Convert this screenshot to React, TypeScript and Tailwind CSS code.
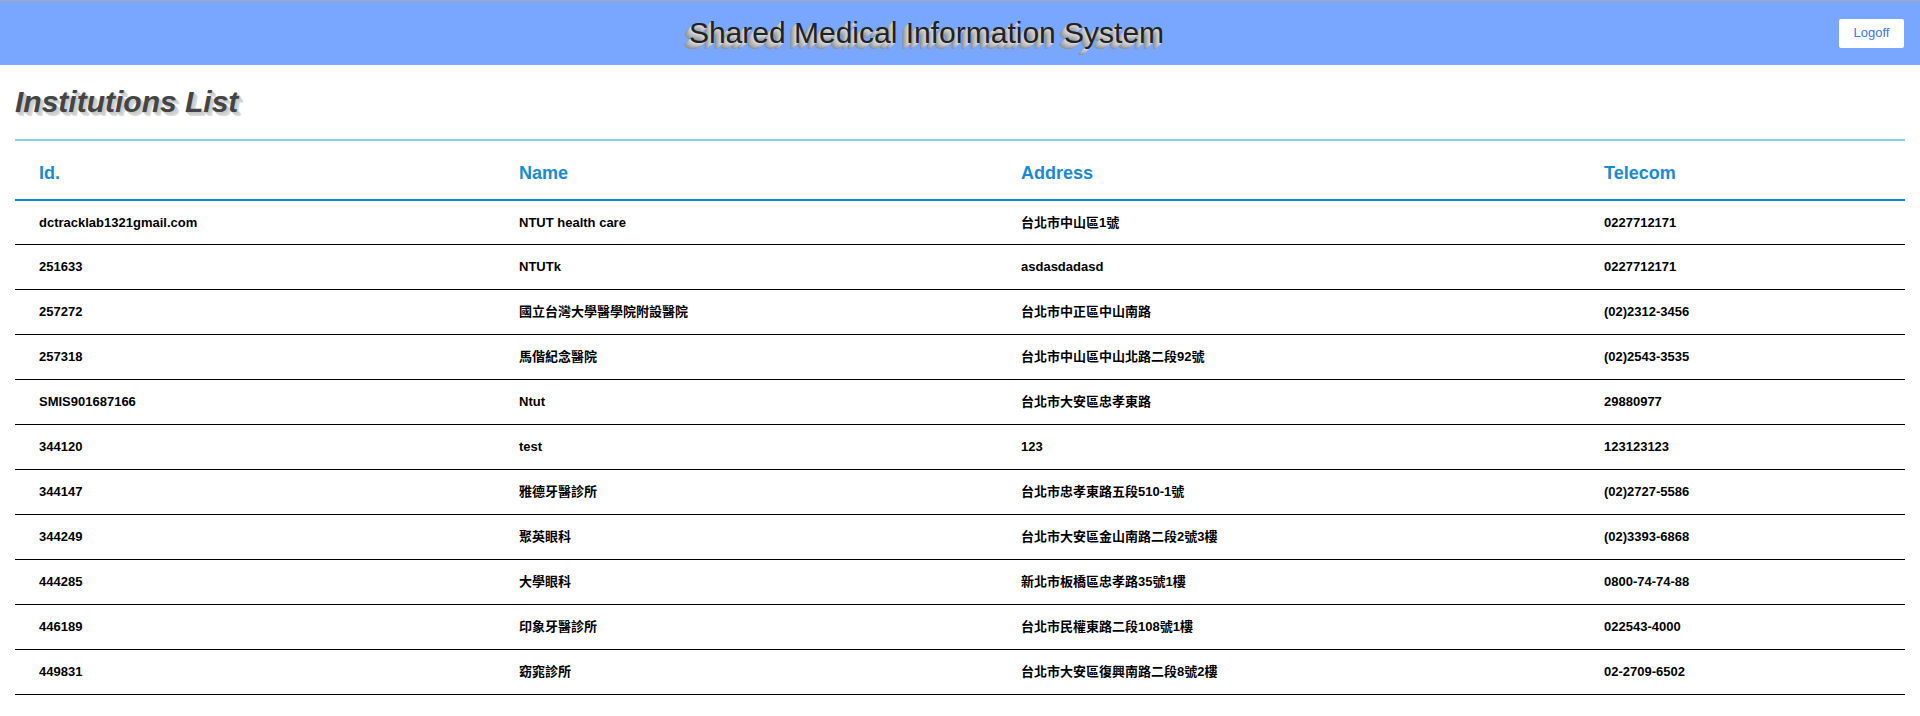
import React from 'react';

interface Institution {
  id: string;
  name: string;
  address: string;
  telecom: string;
}

const institutions: Institution[] = [
  { id: 'dctracklab1321gmail.com', name: 'NTUT health care', address: '台北市中山區1號', telecom: '0227712171' },
  { id: '251633', name: 'NTUTk', address: 'asdasdadasd', telecom: '0227712171' },
  { id: '257272', name: '國立台灣大學醫學院附設醫院', address: '台北市中正區中山南路', telecom: '(02)2312-3456' },
  { id: '257318', name: '馬偕紀念醫院', address: '台北市中山區中山北路二段92號', telecom: '(02)2543-3535' },
  { id: 'SMIS901687166', name: 'Ntut', address: '台北市大安區忠孝東路', telecom: '29880977' },
  { id: '344120', name: 'test', address: '123', telecom: '123123123' },
  { id: '344147', name: '雅德牙醫診所', address: '台北市忠孝東路五段510-1號', telecom: '(02)2727-5586' },
  { id: '344249', name: '聚英眼科', address: '台北市大安區金山南路二段2號3樓', telecom: '(02)3393-6868' },
  { id: '444285', name: '大學眼科', address: '新北市板橋區忠孝路35號1樓', telecom: '0800-74-74-88' },
  { id: '446189', name: '印象牙醫診所', address: '台北市民權東路二段108號1樓', telecom: '022543-4000' },
  { id: '449831', name: '窈窕診所', address: '台北市大安區復興南路二段8號2樓', telecom: '02-2709-6502' },
];

const cols = 'grid grid-cols-[480px_502px_583px_1fr]';

/**
 * Institutions list page of the shared medical information system
 */
export default function App() {
  return (
    <div className="min-h-[716px] bg-white font-['Liberation_Sans','Noto_Sans_CJK_TC',Arial,sans-serif]">
      <header className="flex h-[65px] items-center border-t border-[#a9a9a9] bg-[#79a7ff]">
        <div className="flex-1 pl-[14px] text-center">
          <span className="text-[30px] leading-[34px] text-[#222] [text-shadow:-1px_1px_0_#d3d6db,-2px_2px_0_#c7cace,-3px_3px_0_#bbbec2,-4px_4px_0_#aeb1b5,-5px_5px_0_#a1a4a8,-6px_6px_0_#93969a]">
            Shared Medical Information System
          </span>
        </div>
        <button className="mr-[16px] h-[29px] w-[65px] rounded-[2px] bg-white text-[13px] text-[#3b78e7]">
          Logoff
        </button>
      </header>

      <main className="px-[15px]">
        <h1 className="mt-[20px] mb-[20px] text-[30px] leading-[34px] font-bold italic text-[#444] [text-shadow:1px_1px_0_#c8c8c8,2px_2px_0_#cdcdcd,3px_3px_0_#d4d4d4,4px_4px_0_#dcdcdc]">
          Institutions List
        </h1>

        <div className="border-t-2 border-[#87ceeb]">
          <div className={`${cols} h-[60px] items-center border-b-2 border-[#0b8bd6] pt-[7px] text-[18px] font-bold text-[#1a8ad8]`}>
            <div className="pl-[24px]">Id.</div>
            <div className="pl-[24px]">Name</div>
            <div className="pl-[24px]">Address</div>
            <div className="pl-[24px]">Telecom</div>
          </div>
          {institutions.map((row, i) => (
            <div
              key={row.id}
              className={`${cols} ${i === 0 ? 'h-[44px]' : 'h-[45px]'} items-center border-b border-black text-[13px] font-bold text-black`}
            >
              <div className="pl-[24px]">{row.id}</div>
              <div className="pl-[24px]">{row.name}</div>
              <div className="pl-[24px]">{row.address}</div>
              <div className="pl-[24px]">{row.telecom}</div>
            </div>
          ))}
        </div>
      </main>
    </div>
  );
}
